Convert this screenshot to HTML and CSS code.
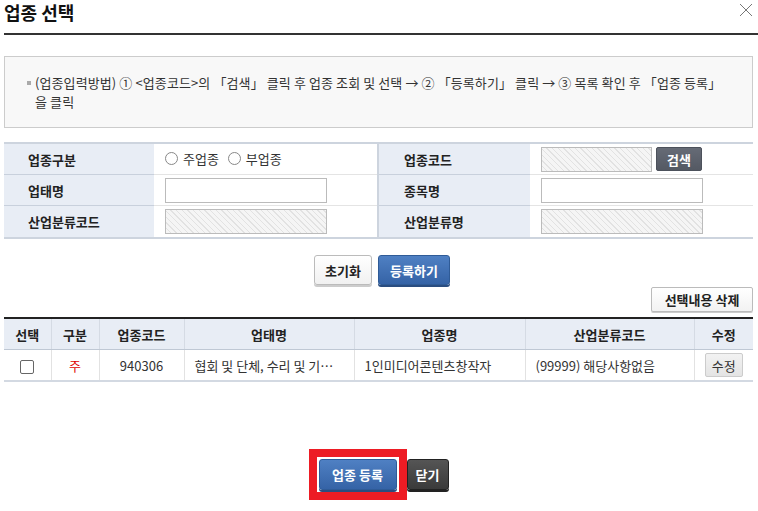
FILE: index.html
```html
<!DOCTYPE html>
<html>
    <head>
        <meta http-equiv="content-type" content="text/html;charset=utf-8">
        <title>업종 선택</title>
        <link rel="stylesheet" href="styles.css">
    </head>
    <body>
        <div class="popup">
            <!-- 제목 -->
            <div class="pop-head">
                <h1 class="pop-title">업종 선택</h1>
                <svg class="pop-close" width="14" height="14" viewBox="0 0 14 14">
                    <path d="M1 1 L13 13 M13 1 L1 13" stroke="#777" stroke-width="1" fill="none"/>
                </svg>
            </div>
            <!-- 안내 -->
            <div class="guide-box">
                <ul class="guide-list">
                    <li>(업종입력방법) ① &lt;업종코드&gt;의 「검색」 클릭 후 업종 조회 및 선택 → ② 「등록하기」 클릭 → ③ 목록 확인 후 「업종 등록」<br>을 클릭</li>
                </ul>
            </div>
            <!-- 입력 -->
            <table class="form-tbl">
                <colgroup>
                    <col style="width:150px"><col style="width:224px"><col style="width:152px"><col>
                </colgroup>
                <tr>
                    <th>업종구분</th>
                    <td>
                        <label class="radio"><span class="radio-dot"></span>주업종</label>
                        <label class="radio"><span class="radio-dot"></span>부업종</label>
                    </td>
                    <th class="th-right">업종코드</th>
                    <td>
                        <div class="code-wrap">
                            <span class="inp inp-short inp-dis"></span>
                            <button class="btn-search">검색</button>
                        </div>
                    </td>
                </tr>
                <tr>
                    <th>업태명</th>
                    <td><span class="inp"></span></td>
                    <th class="th-right">종목명</th>
                    <td><span class="inp"></span></td>
                </tr>
                <tr class="last">
                    <th>산업분류코드</th>
                    <td><span class="inp inp-dis"></span></td>
                    <th class="th-right">산업분류명</th>
                    <td><span class="inp inp-dis"></span></td>
                </tr>
            </table>
            <!-- 버튼 -->
            <div class="btn-row">
                <button class="btn btn-white">초기화</button>
                <button class="btn btn-blue">등록하기</button>
            </div>
            <div class="del-row">
                <button class="btn-del">선택내용 삭제</button>
            </div>
            <!-- 목록 -->
            <table class="list-tbl">
                <colgroup>
                    <col style="width:47px"><col style="width:48px"><col style="width:85px"><col style="width:170px"><col style="width:171px"><col style="width:169px"><col>
                </colgroup>
                <tr>
                    <th>선택</th>
                    <th>구분</th>
                    <th>업종코드</th>
                    <th>업태명</th>
                    <th>업종명</th>
                    <th>산업분류코드</th>
                    <th>수정</th>
                </tr>
                <tr>
                    <td><span class="chk"></span></td>
                    <td class="red">주</td>
                    <td>940306</td>
                    <td class="left">협회 및 단체, 수리 및 기…</td>
                    <td class="left">1인미디어콘텐츠창작자</td>
                    <td class="left">(99999) 해당사항없음</td>
                    <td><button class="btn-edit">수정</button></td>
                </tr>
            </table>
            <!-- 하단 -->
            <div class="foot-row">
                <span class="mark"><button class="btn btn-blue btn-foot">업종 등록</button></span>
                <button class="btn btn-dark btn-foot">닫기</button>
            </div>
        </div>
    </body>
</html>
```

FILE: styles.css
```css
body {
    margin: 0;
    background: #fff;
    font-family: "Noto Sans CJK KR", "Noto Sans", sans-serif;
    color: #333;
}
button {
    font-family: inherit;
    cursor: pointer;
}
.popup {
    padding: 0 5px 0 4px;
}
/* 제목 */
.pop-head {
    position: relative;
    height: 33px;
    margin-right: -5px;
    border-bottom: 2px solid #333;
}
.pop-title {
    margin: 0;
    font-size: 18px;
    line-height: 24px;
    font-weight: bold;
    color: #111;
}
.pop-close {
    position: absolute;
    right: 5px;
    top: 3px;
}
/* 안내 */
.guide-box {
    margin-top: 21px;
    height: 70px;
    border: 1px solid #ccc;
    background: #f8f8f8;
}
.guide-list {
    margin: 0;
    padding: 16px 10px 0 22px;
    list-style: none;
}
.guide-list li {
    position: relative;
    padding-left: 8px;
    font-size: 13px;
    line-height: 19px;
    letter-spacing: 0.1px;
    white-space: nowrap;
    color: #333;
}
.guide-list li:before {
    content: "";
    position: absolute;
    left: 0;
    top: 8px;
    width: 4px;
    height: 4px;
    background: #aaa;
}
/* 입력 테이블 */
.form-tbl {
    width: 749px;
    margin-top: 14px;
    border-collapse: collapse;
    table-layout: fixed;
    border-top: 2px solid #cdd4de;
    border-bottom: 2px solid #cdd4de;
}
.form-tbl th,
.form-tbl td {
    height: 30px;
    padding: 0;
    border-bottom: 1px solid #e4e4e4;
    font-size: 13px;
}
.form-tbl th {
    padding-left: 24px;
    text-align: left;
    background: #e8edf5;
    border-bottom-color: #c8d0dc;
    font-weight: bold;
    color: #222;
}
.form-tbl .th-right {
    padding-left: 25px;
    border-left: 2px solid #cdd4de;
}
.form-tbl td {
    padding-left: 11px;
}
.form-tbl tr.last th,
.form-tbl tr.last td {
    height: 31px;
    border-bottom: 0;
}
.radio {
    display: inline-flex;
    align-items: center;
    margin-right: 6px;
    font-size: 13px;
    color: #333;
}
.radio-dot {
    width: 11px;
    height: 11px;
    margin-right: 5px;
    border: 1px solid #888;
    border-radius: 50%;
    background: #fff;
}
.inp {
    display: block;
    width: 160px;
    height: 23px;
    border: 1px solid #bbb;
    background: #fff;
}
.inp-short {
    width: 109px;
}
.inp-dis {
    background: repeating-linear-gradient(45deg, #f5f5f5 0 3px, #e2e2e2 3px 4px);
}
.code-wrap {
    display: flex;
    align-items: center;
    gap: 4px;
}
.btn-search {
    width: 46px;
    height: 24px;
    padding: 0;
    border: 1px solid #4c515b;
    border-radius: 2px;
    background: linear-gradient(#666b76, #545963);
    color: #fff;
    font-size: 13px;
    font-weight: bold;
}
/* 버튼 */
.btn-row {
    display: flex;
    justify-content: center;
    gap: 6px;
    margin-top: 16px;
    padding-left: 7px;
}
.btn {
    height: 30px;
    padding: 0 10px;
    border-radius: 3px;
    font-size: 13px;
    font-weight: bold;
}
.btn-white {
    width: 58px;
    border: 1px solid #bbb;
    background: linear-gradient(#fff, #f1f1f1);
    box-shadow: 0 2px 0 #ccc;
    color: #222;
}
.btn-blue {
    width: 72px;
    border: 1px solid #2f5b97;
    background: linear-gradient(#4f80c3, #3563a6);
    box-shadow: 0 2px 0 #2a4d80;
    color: #fff;
}
.btn-dark {
    border: 1px solid #222;
    background: linear-gradient(#555, #3a3a3a);
    box-shadow: 0 2px 0 #222;
    color: #fff;
}
.del-row {
    display: flex;
    justify-content: flex-end;
    margin-top: 2px;
}
.btn-del {
    width: 102px;
    height: 25px;
    padding: 0;
    border: 1px solid #bbb;
    border-radius: 2px;
    background: linear-gradient(#fff, #f2f2f2);
    box-shadow: 0 1px 0 #ccc;
    font-size: 13px;
    font-weight: bold;
    color: #222;
}
/* 목록 테이블 */
.list-tbl {
    width: 749px;
    margin-top: 5px;
    border-collapse: collapse;
    table-layout: fixed;
    border-top: 2px solid #222;
    border-bottom: 2px solid #d3d9e2;
}
.list-tbl th,
.list-tbl td {
    height: 30px;
    padding: 0;
    border-left: 1px solid #d5dbe4;
    text-align: center;
    font-size: 13px;
}
.list-tbl th:first-child,
.list-tbl td:first-child {
    border-left: 0;
}
.list-tbl th {
    background: #e8edf5;
    border-bottom: 1px solid #bfc8d4;
    font-weight: bold;
    color: #222;
}
.list-tbl td {
    border-left-color: #e2e2e2;
    color: #333;
}
.list-tbl td.left {
    padding-left: 10px;
    text-align: left;
    white-space: nowrap;
    overflow: hidden;
}
.list-tbl td.red {
    color: #e00000;
}
.chk {
    display: inline-block;
    width: 12px;
    height: 12px;
    border: 1px solid #666;
    border-radius: 2px;
    vertical-align: middle;
}
.btn-edit {
    width: 38px;
    height: 24px;
    padding: 0;
    border: 1px solid #ccc;
    border-radius: 2px;
    background: linear-gradient(#f2f2f2, #e4e4e4);
    font-size: 13px;
    color: #333;
}
/* 하단 */
.foot-row {
    display: flex;
    justify-content: center;
    align-items: flex-start;
    margin-top: 67px;
}
.mark {
    display: block;
    padding: 2px;
    border: 8px solid #ed1c24;
}
.btn-foot {
    display: block;
    height: 31px;
    padding: 0;
}
.mark .btn-foot {
    width: 78px;
}
.btn-dark.btn-foot {
    width: 42px;
    margin-top: 10px;
}
```
